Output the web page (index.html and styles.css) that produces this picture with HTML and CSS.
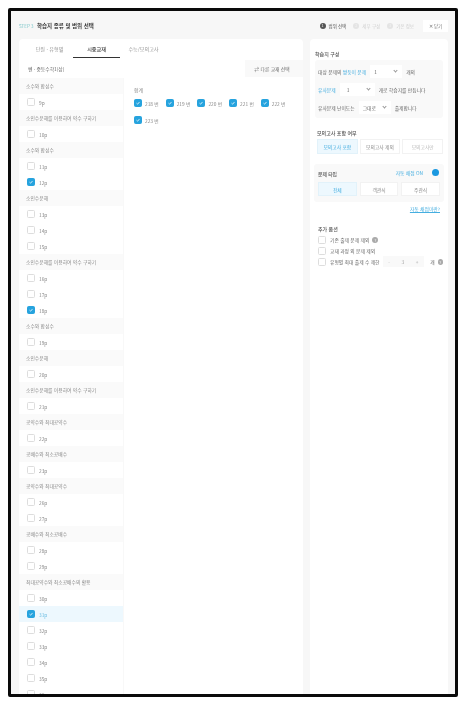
FILE: index.html
```html
<!DOCTYPE html>
<html lang="ko">
<head>
<meta charset="utf-8">
<title>학습지 종류 및 범위 선택</title>
<link rel="stylesheet" href="styles.css">
</head>
<body>
<div class="frame">
  <header class="topbar">
    <span class="step">STEP 3</span>
    <h1 class="title">학습지 종류 및 범위 선택</h1>
    <ol class="steps">
      <li class="stepitem on"><span class="num">1</span>범위 선택</li>
      <li class="stepitem"><span class="num">2</span>세부 구성</li>
      <li class="stepitem"><span class="num">3</span>기본 정보</li>
    </ol>
    <button class="close">✕ 닫기</button>
  </header>
  <div class="panels">
    <section class="left">
      <nav class="tabs">
        <span class="tab">단원 · 유형별</span>
        <span class="tab active">시중교재</span>
        <span class="tab">수능/모의고사</span>
      </nav>
      <div class="bookbar">
        <span class="book">쎈 · 중등수학1(상)</span>
        <button class="swap">⇄ 다른 교재 선택</button>
      </div>
      <div class="columns">
        <div class="pages">
          <div class="group">소수와 합성수</div>
          <label class="page"><i class="cb"></i>9p</label>
          <div class="group">소인수분해를 이용하여 약수 구하기</div>
          <label class="page"><i class="cb"></i>10p</label>
          <div class="group">소수와 합성수</div>
          <label class="page"><i class="cb"></i>11p</label>
          <label class="page"><i class="cb on"><svg viewBox="0 0 8 8"><path d="M2 4.2 3.5 5.6 6 2.6"/></svg></i>12p</label>
          <div class="group">소인수분해</div>
          <label class="page"><i class="cb"></i>13p</label>
          <label class="page"><i class="cb"></i>14p</label>
          <label class="page"><i class="cb"></i>15p</label>
          <div class="group">소인수분해를 이용하여 약수 구하기</div>
          <label class="page"><i class="cb"></i>16p</label>
          <label class="page"><i class="cb"></i>17p</label>
          <label class="page"><i class="cb on"><svg viewBox="0 0 8 8"><path d="M2 4.2 3.5 5.6 6 2.6"/></svg></i>18p</label>
          <div class="group">소수와 합성수</div>
          <label class="page"><i class="cb"></i>19p</label>
          <div class="group">소인수분해</div>
          <label class="page"><i class="cb"></i>20p</label>
          <div class="group">소인수분해를 이용하여 약수 구하기</div>
          <label class="page"><i class="cb"></i>21p</label>
          <div class="group">공약수와 최대공약수</div>
          <label class="page"><i class="cb"></i>22p</label>
          <div class="group">공배수와 최소공배수</div>
          <label class="page"><i class="cb"></i>23p</label>
          <div class="group">공약수와 최대공약수</div>
          <label class="page"><i class="cb"></i>26p</label>
          <label class="page"><i class="cb"></i>27p</label>
          <div class="group">공배수와 최소공배수</div>
          <label class="page"><i class="cb"></i>28p</label>
          <label class="page"><i class="cb"></i>29p</label>
          <div class="group">최대공약수와 최소공배수의 활용</div>
          <label class="page"><i class="cb"></i>30p</label>
          <label class="page sel"><i class="cb on"><svg viewBox="0 0 8 8"><path d="M2 4.2 3.5 5.6 6 2.6"/></svg></i>31p</label>
          <label class="page"><i class="cb"></i>32p</label>
          <label class="page"><i class="cb"></i>33p</label>
          <label class="page"><i class="cb"></i>34p</label>
          <label class="page"><i class="cb"></i>35p</label>
          <label class="page"><i class="cb"></i>36p</label>
        </div>
        <div class="problems">
          <div class="pagehead">합계</div>
          <div class="nums">
            <label class="num-item"><i class="cb on"><svg viewBox="0 0 8 8"><path d="M2 4.2 3.5 5.6 6 2.6"/></svg></i>218 번</label>
            <label class="num-item"><i class="cb on"><svg viewBox="0 0 8 8"><path d="M2 4.2 3.5 5.6 6 2.6"/></svg></i>219 번</label>
            <label class="num-item"><i class="cb on"><svg viewBox="0 0 8 8"><path d="M2 4.2 3.5 5.6 6 2.6"/></svg></i>220 번</label>
            <label class="num-item"><i class="cb on"><svg viewBox="0 0 8 8"><path d="M2 4.2 3.5 5.6 6 2.6"/></svg></i>221 번</label>
            <label class="num-item"><i class="cb on"><svg viewBox="0 0 8 8"><path d="M2 4.2 3.5 5.6 6 2.6"/></svg></i>222 번</label>
            <label class="num-item"><i class="cb on"><svg viewBox="0 0 8 8"><path d="M2 4.2 3.5 5.6 6 2.6"/></svg></i>223 번</label>
          </div>
        </div>
      </div>
    </section>
    <aside class="right">
      <h2 class="head first">학습지 구성</h2>
      <div class="config">
        <div class="cfg-row"><span>대상 문제의 <b class="blue">쌍둥이 문제</b></span><span class="select sel-a"><span>1</span><em></em></span><span>개의</span></div>
        <div class="cfg-row"><b class="blue">유사문제</b><span class="select sel-b"><span>1</span><em></em></span><span>개로 학습지를 만듭니다</span></div>
        <div class="cfg-row"><span>유사문제 난이도는</span><span class="select"><span>그대로</span><em></em></span><span>출제합니다</span></div>
      </div>
      <h2 class="head mock">모의고사 포함 여부</h2>
      <div class="toggle">
        <span class="opt active">모의고사 포함</span>
        <span class="opt">모의고사 제외</span>
        <span class="opt light">모의고사만</span>
      </div>
      <div class="typebox">
        <div class="typehead"><b class="typetitle">문제 타입</b><span class="auto">자동 채점 ON</span><i class="dot"></i></div>
        <div class="toggle inner">
          <span class="opt active">전체</span>
          <span class="opt">객관식</span>
          <span class="opt">주관식</span>
        </div>
      </div>
      <a class="link">자동 채점이란?</a>
      <h2 class="head extra">추가 옵션</h2>
      <div class="option"><i class="cb"></i>기존 출제 문제 제외<span class="help">?</span></div>
      <div class="option"><i class="cb"></i>교재 과정 외 문제 제외</div>
      <div class="option"><i class="cb"></i>유형별 최대 출제 수 제한
        <span class="stepper"><span>-</span><span>3</span><span>+</span></span>개<span class="help">?</span></div>
    </aside>
  </div>
</div>
</body>
</html>
```
FILE: styles.css
```css
* { box-sizing: border-box; }
html, body { margin: 0; height: 100%; background: #fff; overflow: hidden; }
body { padding: 8px 8px 9px 8px; font-family: "Noto Sans CJK KR", "Noto Sans", sans-serif; color: #555; font-size: 4.8px; }
.frame {
  width: 450px; height: 689px; border: 3px solid #0a0a0a; border-radius: 2px;
  background: #f7f7f7; display: flex; flex-direction: column; overflow: hidden;
  padding: 0 7px 0 8px; filter: blur(0.3px);
}
.topbar { height: 28px; flex: none; display: flex; align-items: center; padding-top: 1px; }
.step { font-size: 4.5px; color: #7cc6c9; width: 18px; }
.title { margin: 0; font-size: 5.5px; font-weight: 700; color: #333; }
.steps { list-style: none; display: flex; margin: 0 0 0 auto; padding: 0; gap: 7px; }
.stepitem { display: flex; align-items: center; gap: 3px; color: #d0d0d0; font-size: 4.5px; }
.stepitem.on { color: #555; }
.num { width: 6px; height: 6px; border-radius: 50%; background: #e4e4e4; color: #f4f4f4; display: flex; align-items: center; justify-content: center; font-size: 3.5px; }
.on .num { background: #555; color: #fff; }
.close { margin-left: 9px; width: 25px; height: 12px; border: 0; padding: 0; background: #fff; color: #777; font: inherit; font-size: 4.5px; }
.panels { display: flex; gap: 7px; flex: 1; min-height: 0; }
.left { width: 284px; background: #fff; border-radius: 4px 4px 0 0; display: flex; flex-direction: column; overflow: hidden; }
.tabs { display: flex; height: 19px; flex: none; padding-left: 7px; }
.tab { width: 47px; display: flex; align-items: center; justify-content: center; color: #999; font-size: 5.1px; }
.tab.active { color: #333; font-weight: 500; border-bottom: 1px solid #333; }
.bookbar { height: 20px; flex: none; display: flex; align-items: center; justify-content: space-between; padding-left: 9px; }
.book { color: #666; }
.swap { width: 58px; height: 17px; border: 0; padding: 0 4px 0 0; background: #f9f9f9; color: #666; font: inherit; font-size: 4.8px; }
.columns { display: flex; flex: 1; min-height: 0; }
.pages { width: 105px; flex: none; border-right: 1px solid #f8f8f8; }
.group { height: 16px; background: #fafafa; padding: 0 0 1px 7px; display: flex; align-items: center; color: #888; }
.page { height: 16px; padding-left: 8px; display: flex; align-items: center; gap: 4px; color: #888; }
.page.sel { background: #edf8fe; color: #6bbde2; }
.cb { width: 8px; height: 8px; flex: none; border: 0.5px solid #ddd; border-radius: 1.5px; background: #fff; display: block; }
.cb.on { background: #26a3de; border-color: #26a3de; }
.cb svg { display: block; width: 100%; height: 100%; fill: none; stroke: #fff; stroke-width: 1; }
.problems { flex: 1; padding: 4px 0 0 10px; }
.pagehead { color: #888; height: 14px; display: flex; align-items: center; }
.nums { display: flex; flex-wrap: wrap; width: 160px; row-gap: 9px; margin-top: 3px; }
.num-item { width: 31.7px; height: 8px; display: flex; align-items: center; gap: 3px; color: #888; }
.right { width: 138px; background: #fff; border-radius: 4px 4px 0 0; padding: 0 5px; overflow: hidden; }
.head { margin: 0; font-size: 5px; font-weight: 500; color: #555; }
.head.first { padding-top: 11px; height: 21px; }
.config { background: #f9f9f9; border-radius: 3px; height: 58px; padding: 2px 3px 0; }
.cfg-row { height: 18px; display: flex; align-items: center; gap: 4px; color: #666; white-space: nowrap; }
.blue { color: #45aee0; font-weight: 400; }
.select { width: 32px; height: 13px; background: #fff; padding: 0 4px; display: flex; align-items: center; justify-content: space-between; }
.select.sel-a { width: 32px; }
.select.sel-b { width: 35px; padding-left: 7px; }
.select em { width: 3px; height: 3px; border-right: 0.6px solid #999; border-bottom: 0.6px solid #999; transform: rotate(45deg); margin: -1px 1px 0 0; }
.head.mock { margin-top: 11px; height: 9px; padding-left: 2px; }
.toggle { display: flex; gap: 2px; height: 15px; margin-top: 1px; padding-left: 2px; }
.opt { flex: 1; display: flex; align-items: center; justify-content: center; color: #888; border: 0.5px solid #f2f2f2; background: #fff; }
.opt.active { background: #edf8fe; color: #45aee0; border-color: #e2f2fa; }
.opt.light { color: #bbb; }
.typebox { margin: 10px -1px 0; height: 38px; background: #f9f9f9; border-radius: 3px; padding: 5px 4px 0; }
.typehead { display: flex; align-items: center; height: 9px; padding-right: 1px; }
.typetitle { font-weight: 500; color: #555; }
.auto { margin: -3px 0 0 auto; color: #45aee0; }
.dot { width: 7px; height: 7px; border-radius: 50%; background: #1b98e0; margin: -3px 0 0 9px; }
.toggle.inner { margin-top: 4px; gap: 3px; height: 14px; padding: 0; }
.link { display: block; text-align: right; margin-top: 3px; padding-right: 3px; color: #45aee0; text-decoration: underline; height: 8px; line-height: 8px; }
.head.extra { margin-top: 12px; height: 9px; padding-left: 3px; }
.option { height: 11px; display: flex; align-items: center; gap: 4px; padding-left: 3px; color: #666; white-space: nowrap; }
.help { width: 6px; height: 6px; border-radius: 50%; background: #aaa; color: #fff; font-size: 4px; display: flex; align-items: center; justify-content: center; margin-left: -1px; }
.stepper { width: 46px; height: 11px; display: flex; background: #f9f9f9; justify-content: space-around; align-items: center; color: #aaa; margin: 0 2px 0 -1px; }
```
